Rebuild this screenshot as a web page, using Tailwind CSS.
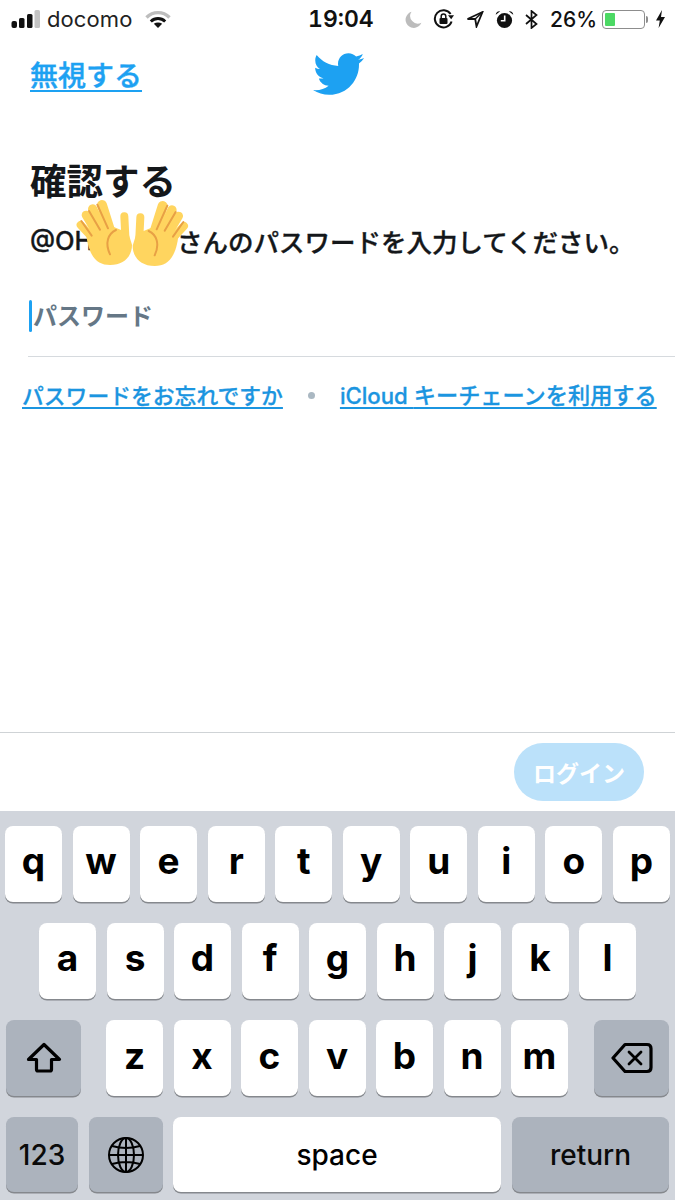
<!DOCTYPE html>
<html lang="ja">
<head>
<meta charset="utf-8">
<script src="https://cdn.jsdelivr.net/npm/@tailwindcss/browser@4"></script>
</head>
<body class="bg-white">
<div class="relative w-[675px] h-[1200px] overflow-hidden bg-white flex flex-col font-['Inter','Noto_Sans_CJK_JP',sans-serif] text-[#14171a]">

  <!-- Status bar -->
  <div class="h-[38px] shrink-0 flex items-center pl-[11px] pr-[10px]">
    <div class="w-[297px] flex items-center">
      <svg width="30" height="20" viewBox="0 0 30 20" class="mr-[6px]">
        <rect x="0.5" y="12" width="5.5" height="7" rx="2" fill="#111"/>
        <rect x="8" y="9" width="5.5" height="10" rx="1.5" fill="#111"/>
        <rect x="16" y="5" width="5.5" height="14" rx="1.5" fill="#111"/>
        <rect x="23.5" y="1" width="5.5" height="18" rx="1.5" fill="#c4c4c4"/>
      </svg>
      <span class="text-[22px] leading-none font-normal text-[#222] tracking-[0.1px]">docomo</span>
      <svg width="26" height="19" viewBox="0 0 26 19" class="ml-[12px]">
        <path d="M1.5 7.5C8 1 18 1 24.5 7.5" fill="none" stroke="#bdbdbd" stroke-width="3.4"/>
        <path d="M5.8 11.5C10 7.6 16 7.6 20.2 11.5" fill="none" stroke="#111" stroke-width="3"/>
        <path d="M8.8 13.8C11.4 11.9 14.6 11.9 17.2 13.8L13 18Z" fill="#111"/>
      </svg>
    </div>
    <div class="w-[64px] text-center text-[23px] leading-none font-semibold text-[#111] tabular-nums whitespace-nowrap">19:04</div>
    <div class="flex-1 flex items-center justify-end">
      <svg width="17" height="17" viewBox="0 0 17 17" class="mr-[11px]"><path d="M6.5 0.8A8.2 8.2 0 1 0 16.4 11.7 7.6 7.6 0 0 1 6.5 0.8Z" fill="#bcbcbc"/></svg>
      <svg width="22" height="20" viewBox="0 0 22 20" class="mr-[11px]">
        <path d="M18.6 12.5A8.6 8.6 0 1 1 17.6 5" fill="none" stroke="#111" stroke-width="2"/>
        <path d="M15 6.2H21L18.2 10.2Z" fill="#111"/>
        <rect x="6.5" y="9" width="8" height="6" rx="1" fill="#111"/>
        <path d="M8.2 9V7.3A2.3 2.3 0 0 1 12.8 7.3V9" fill="none" stroke="#111" stroke-width="1.5"/>
      </svg>
      <svg width="18" height="17" viewBox="0 0 18 17" class="mr-[11px]">
        <path d="M16.5 1L1.5 8H9.2L10.5 15.5Z" fill="none" stroke="#111" stroke-width="1.8" stroke-linejoin="miter"/>
        <path d="M9.2 8L16.5 1" stroke="#111" stroke-width="1.4"/>
      </svg>
      <svg width="19" height="19" viewBox="0 0 19 19" class="mr-[11px]">
        <circle cx="9.5" cy="10.5" r="7.6" fill="#111"/>
        <path d="M9.7 5.5V10.8H5.8" fill="none" stroke="#fff" stroke-width="1.6"/>
        <path d="M0.8 4.8A3.4 3.4 0 0 1 5.2 1.3Z M18.2 4.8A3.4 3.4 0 0 0 13.8 1.3Z" fill="#111"/>
      </svg>
      <svg width="13" height="19" viewBox="0 0 13 19" class="mr-[12px]">
        <path d="M1 5L11.5 14 6.5 18V1L11.5 5 1 14" fill="none" stroke="#111" stroke-width="1.7"/>
      </svg>
      <span class="text-[21px] leading-none font-medium text-[#111] mr-[5px]">26%</span>
      <div class="relative w-[43px] h-[19px] rounded-[4px] border border-[#8d8d8d] mr-[1px] p-[2px]">
        <div class="w-[10px] h-full bg-[#4cd964] rounded-[1px]"></div>
      </div>
      <div class="w-[2px] h-[7px] bg-[#8d8d8d] rounded-r-[2px] mr-[8px]"></div>
      <svg width="9" height="18" viewBox="0 0 9 18"><path d="M6 0L0 10.5H3.8L2.6 18 9 7H5Z" fill="#111"/></svg>
    </div>
  </div>

  <!-- Header -->
  <div class="relative h-[60px] shrink-0 pl-[30px] pt-[15px]">
    <a class="block text-[28px] leading-[42px] font-medium text-[#1da1f2] underline underline-offset-[4px] decoration-[2px] w-fit font-['Noto_Sans_CJK_JP',sans-serif] [-webkit-text-stroke:0.4px_#1da1f2]">無視する</a>
    <svg class="absolute left-[311px] top-[9px]" width="54" height="54" viewBox="0 0 24 24"><path fill="#1da1f2" d="M23.643 4.937c-.835.37-1.732.62-2.675.733.962-.576 1.7-1.49 2.048-2.578-.9.534-1.897.922-2.958 1.13-.85-.904-2.06-1.47-3.4-1.47-2.572 0-4.658 2.086-4.658 4.66 0 .364.042.718.12 1.06-3.873-.195-7.304-2.05-9.602-4.868-.4.69-.63 1.49-.63 2.342 0 1.616.823 3.043 2.072 3.878-.764-.025-1.482-.234-2.11-.583v.06c0 2.257 1.605 4.14 3.737 4.568-.392.106-.803.162-1.227.162-.3 0-.593-.028-.877-.082.593 1.85 2.313 3.198 4.352 3.234-1.595 1.25-3.604 1.995-5.786 1.995-.376 0-.747-.022-1.112-.065 2.062 1.323 4.51 2.093 7.14 2.093 8.57 0 13.255-7.098 13.255-13.254 0-.2-.005-.402-.014-.602.91-.658 1.7-1.477 2.323-2.41z"/></svg>
  </div>

  <!-- Body -->
  <div class="flex-1 min-h-0 flex flex-col">
    <h1 class="mt-[56px] pl-[30px] text-[36.5px] leading-[52px] font-bold text-[#14171a] font-['Noto_Sans_CJK_JP',sans-serif]">確認する</h1>
    <p class="mt-[16px] pl-[30px] flex text-[25.5px] leading-[38px] font-medium whitespace-nowrap font-['Noto_Sans_CJK_JP',sans-serif] [-webkit-text-stroke:0.35px_#14171a]">
      <span class="w-[147px] font-['Inter',sans-serif]">@OH</span><span>さんのパスワードを入力してください。</span>
    </p>
    <div class="mt-[27px] ml-[28px] h-[70px] border-b border-[#d6dade] flex items-start">
      <div class="w-[3px] h-[32px] mt-[13px] ml-[1px] rounded-full bg-[#1da1f2]"></div>
      <span class="ml-[1px] mt-[10px] text-[24px] leading-[36px] font-bold text-[#657786] font-['Noto_Sans_CJK_JP',sans-serif]">パスワード</span>
    </div>
    <div class="mt-[21px] pl-[22px] flex items-center leading-[32px] font-medium text-[#1b95e0] whitespace-nowrap font-['Noto_Sans_CJK_JP',sans-serif] [-webkit-text-stroke:0.3px_#1b95e0]">
      <a class="text-[21.8px] underline underline-offset-[3px] decoration-[2px]">パスワードをお忘れですか</a>
      <span class="ml-[25px] mr-[25px] w-[7px] h-[7px] rounded-full bg-[#aab8c2]"></span>
      <a class="text-[22.2px] underline underline-offset-[3px] decoration-[2px]"><span class="font-['Inter',sans-serif]">iCloud </span>キーチェーンを利用する</a>
    </div>
  </div>

  <!-- Action bar -->
  <div class="h-[79px] shrink-0 border-t border-[#cfd3d6] flex justify-end pt-[10px] pr-[31px]">
    <div class="w-[130px] h-[58px] rounded-full bg-[#bbe1fa] flex items-center justify-center text-white text-[23px] font-bold font-['Noto_Sans_CJK_JP',sans-serif]">ログイン</div>
  </div>

  <!-- Keyboard -->
  <div class="h-[389px] shrink-0 bg-[#d1d5dc] pt-[15px] flex flex-col gap-[21px] text-black font-bold text-[37px] leading-none">
    <div class="flex gap-[10.5px] px-[5px] h-[76px]">
      <div class="flex-1 rounded-[8px] bg-white shadow-[0_1.5px_0_#85888d] flex items-center justify-center pb-[8px]">q</div>
      <div class="flex-1 rounded-[8px] bg-white shadow-[0_1.5px_0_#85888d] flex items-center justify-center pb-[8px]">w</div>
      <div class="flex-1 rounded-[8px] bg-white shadow-[0_1.5px_0_#85888d] flex items-center justify-center pb-[8px]">e</div>
      <div class="flex-1 rounded-[8px] bg-white shadow-[0_1.5px_0_#85888d] flex items-center justify-center pb-[8px]">r</div>
      <div class="flex-1 rounded-[8px] bg-white shadow-[0_1.5px_0_#85888d] flex items-center justify-center pb-[8px]">t</div>
      <div class="flex-1 rounded-[8px] bg-white shadow-[0_1.5px_0_#85888d] flex items-center justify-center pb-[8px]">y</div>
      <div class="flex-1 rounded-[8px] bg-white shadow-[0_1.5px_0_#85888d] flex items-center justify-center pb-[8px]">u</div>
      <div class="flex-1 rounded-[8px] bg-white shadow-[0_1.5px_0_#85888d] flex items-center justify-center pb-[8px]">i</div>
      <div class="flex-1 rounded-[8px] bg-white shadow-[0_1.5px_0_#85888d] flex items-center justify-center pb-[8px]">o</div>
      <div class="flex-1 rounded-[8px] bg-white shadow-[0_1.5px_0_#85888d] flex items-center justify-center pb-[8px]">p</div>
    </div>
    <div class="flex gap-[10.5px] px-[39px] h-[76px]">
      <div class="flex-1 rounded-[8px] bg-white shadow-[0_1.5px_0_#85888d] flex items-center justify-center pb-[8px]">a</div>
      <div class="flex-1 rounded-[8px] bg-white shadow-[0_1.5px_0_#85888d] flex items-center justify-center pb-[8px]">s</div>
      <div class="flex-1 rounded-[8px] bg-white shadow-[0_1.5px_0_#85888d] flex items-center justify-center pb-[8px]">d</div>
      <div class="flex-1 rounded-[8px] bg-white shadow-[0_1.5px_0_#85888d] flex items-center justify-center pb-[8px]">f</div>
      <div class="flex-1 rounded-[8px] bg-white shadow-[0_1.5px_0_#85888d] flex items-center justify-center pb-[8px]">g</div>
      <div class="flex-1 rounded-[8px] bg-white shadow-[0_1.5px_0_#85888d] flex items-center justify-center pb-[8px]">h</div>
      <div class="flex-1 rounded-[8px] bg-white shadow-[0_1.5px_0_#85888d] flex items-center justify-center pb-[8px]">j</div>
      <div class="flex-1 rounded-[8px] bg-white shadow-[0_1.5px_0_#85888d] flex items-center justify-center pb-[8px]">k</div>
      <div class="flex-1 rounded-[8px] bg-white shadow-[0_1.5px_0_#85888d] flex items-center justify-center pb-[8px]">l</div>
    </div>
    <div class="flex px-[6px] h-[76px]">
      <div class="w-[75px] rounded-[8px] bg-[#acb3bd] shadow-[0_1.5px_0_#85888d] flex items-center justify-center">
        <svg width="36" height="32" viewBox="0 0 36 32"><path d="M18 2.5L33.5 17.5H25.5V27.5Q25.5 29 24 29H12Q10.5 29 10.5 27.5V17.5H2.5Z" fill="none" stroke="#000" stroke-width="3.2" stroke-linejoin="round"/></svg>
      </div>
      <div class="ml-[25px] flex gap-[10.5px] w-[462px]">
        <div class="flex-1 rounded-[8px] bg-white shadow-[0_1.5px_0_#85888d] flex items-center justify-center pb-[6px]">z</div>
        <div class="flex-1 rounded-[8px] bg-white shadow-[0_1.5px_0_#85888d] flex items-center justify-center pb-[6px]">x</div>
        <div class="flex-1 rounded-[8px] bg-white shadow-[0_1.5px_0_#85888d] flex items-center justify-center pb-[6px]">c</div>
        <div class="flex-1 rounded-[8px] bg-white shadow-[0_1.5px_0_#85888d] flex items-center justify-center pb-[6px]">v</div>
        <div class="flex-1 rounded-[8px] bg-white shadow-[0_1.5px_0_#85888d] flex items-center justify-center pb-[6px]">b</div>
        <div class="flex-1 rounded-[8px] bg-white shadow-[0_1.5px_0_#85888d] flex items-center justify-center pb-[6px]">n</div>
        <div class="flex-1 rounded-[8px] bg-white shadow-[0_1.5px_0_#85888d] flex items-center justify-center pb-[6px]">m</div>
      </div>
      <div class="ml-[26px] w-[75px] rounded-[8px] bg-[#acb3bd] shadow-[0_1.5px_0_#85888d] flex items-center justify-center">
        <svg width="42" height="32" viewBox="0 0 42 32"><path d="M14 2.5H36Q40 2.5 40 6.5V25.5Q40 29.5 36 29.5H14L2 16Z" fill="none" stroke="#000" stroke-width="3.2" stroke-linejoin="round"/><path d="M18 10L30 22M30 10L18 22" stroke="#000" stroke-width="2.8" stroke-linecap="round"/></svg>
      </div>
    </div>
    <div class="flex px-[6px] h-[75px] text-[28px] font-medium">
      <div class="w-[72px] rounded-[8px] bg-[#acb3bd] shadow-[0_1.5px_0_#85888d] flex items-center justify-center text-[#0a0a0a]">123</div>
      <div class="ml-[11px] w-[74px] rounded-[8px] bg-[#acb3bd] shadow-[0_1.5px_0_#85888d] flex items-center justify-center">
        <svg width="38" height="38" viewBox="0 0 38 38" fill="none" stroke="#000" stroke-width="2"><circle cx="19" cy="19" r="17"/><ellipse cx="19" cy="19" rx="8" ry="17"/><path d="M19 2V36M2 19H36M5 10Q19 14 33 10M5 28Q19 24 33 28"/></svg>
      </div>
      <div class="ml-[10px] w-[328px] rounded-[8px] bg-white shadow-[0_1.5px_0_#85888d] flex items-center justify-center">space</div>
      <div class="ml-[11px] w-[157px] rounded-[8px] bg-[#acb3bd] shadow-[0_1.5px_0_#85888d] flex items-center justify-center text-[#0a0a0a]">return</div>
    </div>
  </div>

  <!-- Emoji sticker laid over the text -->
  <svg class="absolute left-[75px] top-[198px]" width="114" height="71" viewBox="225 145 342 213">
    <g>
      <g stroke="#ffd55f" stroke-linecap="round" fill="none">
        <path d="M345 290L306 166" stroke-width="30"/>
        <path d="M330 290L278 178" stroke-width="28"/>
        <path d="M320 300L258 196" stroke-width="26"/>
        <path d="M310 300L242 226" stroke-width="24"/>
        <path d="M378 300L373 200" stroke-width="24"/>
      </g>
      <path d="M258 250C266 320 290 346 330 346C372 346 396 320 396 285L385 250L300 215Z" fill="#ffd55f"/>
      <g stroke="#e8a045" stroke-width="6" stroke-linecap="round" fill="none">
        <path d="M292 165L324 236"/>
        <path d="M267 184L300 240"/>
        <path d="M244 214L275 258"/>
        <path d="M348 241C324 252 314 280 330 314"/>
      </g>
    </g>
    <g transform="translate(794 3) scale(-1 1)">
      <g stroke="#ffd55f" stroke-linecap="round" fill="none">
        <path d="M345 290L306 166" stroke-width="30"/>
        <path d="M330 290L278 178" stroke-width="28"/>
        <path d="M320 300L258 196" stroke-width="26"/>
        <path d="M310 300L242 226" stroke-width="24"/>
        <path d="M378 300L373 200" stroke-width="24"/>
      </g>
      <path d="M258 250C266 320 290 346 330 346C372 346 396 320 396 285L385 250L300 215Z" fill="#ffd55f"/>
      <g stroke="#e8a045" stroke-width="6" stroke-linecap="round" fill="none">
        <path d="M292 165L324 236"/>
        <path d="M267 184L300 240"/>
        <path d="M244 214L275 258"/>
        <path d="M348 241C324 252 314 280 330 314"/>
      </g>
    </g>
  </svg>
</div>
</body>
</html>
